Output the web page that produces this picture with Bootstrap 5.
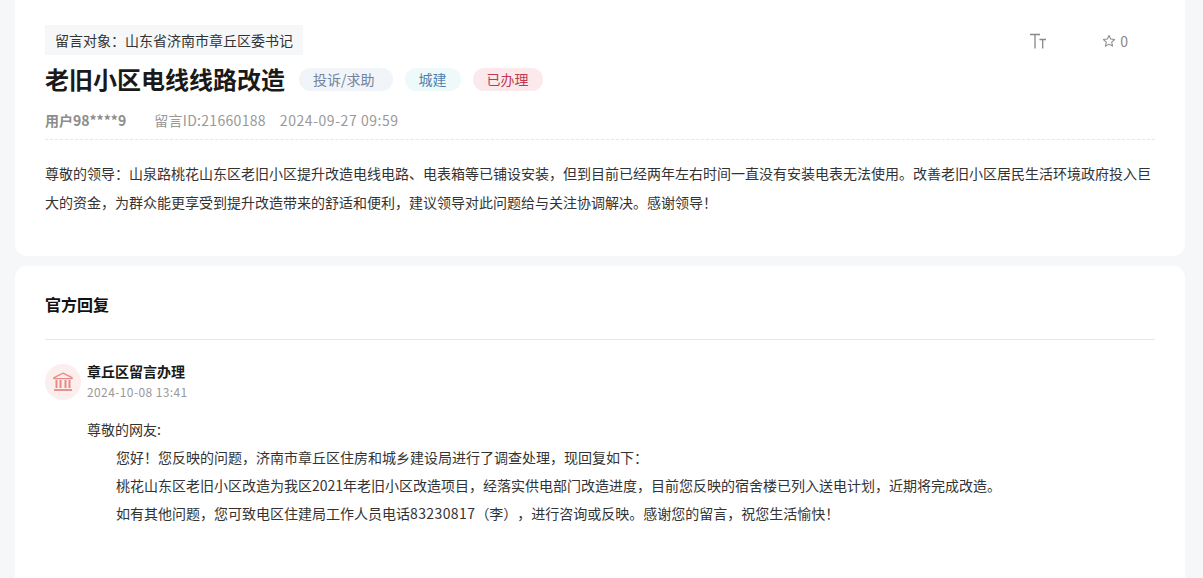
<!DOCTYPE html>
<html lang="zh-CN">
<head>
    <meta charset="UTF-8">
    <meta name="viewport" content="width=device-width, initial-scale=1.0">
    <title>留言详情</title>
    <link href="https://cdn.jsdelivr.net/npm/bootstrap@5.3.0/dist/css/bootstrap.min.css" rel="stylesheet">
    <style>
        html, body { height: 578px; overflow: hidden; }
        body { background: #f6f7f9; font-family: "Noto Sans CJK SC", "Liberation Sans", sans-serif; color: #222; font-size: 14px; text-spacing-trim: space-all; }
        .page-wrap { padding: 0 18px 0 15px; }
        .panel-box { background: #fff; border-radius: 12px; padding: 0 30px; }
        .panel-top { height: 256px; border-radius: 0 0 12px 12px; padding-top: 25px; margin-bottom: 10px; }
        .panel-reply { height: 330px; padding-top: 26px; }
        .target-tag { background: #f6f7f9; height: 30px; line-height: 30px; padding: 0 10px; color: #333; }
        .top-tools { width: 99px; margin-right: 27px; color: #888; height: 32px; }
        .main-title { font-size: 24px; font-weight: 700; color: #1a1a1a; line-height: 34px; margin: 0 2px 0 0; }
        .title-line { margin-top: 5px; gap: 12px; }
        .pill-tag { height: 23px; line-height: 23px; border-radius: 12px; padding: 0 14px; }
        .pill-type { background: #f1f4f9; color: #74839b; padding-right: 18px; }
        .pill-area { background: #eefaf9; color: #4f7fb0; }
        .pill-state { background: #fbe9ec; color: #c0394f; }
        .meta-line { margin-top: 14px; color: #999; line-height: 20px; padding-bottom: 9px; border-bottom: 1px dashed #e6e6e6; }
        .meta-user { font-weight: 700; color: #8c8c8c; margin-right: 28px; }
        .meta-id { margin-right: 14px; letter-spacing: .3px; }
        .meta-time { letter-spacing: .55px; }
        .body-text { margin: 19px 0 0; line-height: 29px; color: #333; }
        .reply-title { font-size: 16px; font-weight: 700; color: #111; line-height: 24px; padding-bottom: 23px; border-bottom: 1px solid #e8e8e8; }
        .reply-head { margin-top: 24px; }
        .org-icon { width: 36px; height: 36px; border-radius: 50%; background: #fdeeee; margin-right: 6px; }
        .org-text { margin-top: -2px; }
        .org-name { font-weight: 700; color: #1a1a1a; line-height: 18px; }
        .org-time { font-size: 12px; color: #999; line-height: 18px; margin-top: 3px; letter-spacing: .4px; }
        .reply-body { margin: 14px 0 0 42px; line-height: 28px; color: #333; }
        .reply-body p { margin: 0; }
        .reply-indent { padding-left: 29px; }
        .phone-no { letter-spacing: .4px; }
    </style>
</head>
<body>
    <div class="page-wrap">
        <!-- 留言内容 -->
        <div class="panel-box panel-top">
            <div class="d-flex justify-content-between">
                <div class="target-tag">留言对象：山东省济南市章丘区委书记</div>
                <div class="top-tools d-flex align-items-center justify-content-between">
                    <svg width="18" height="18" viewBox="0 0 18 18" fill="none" stroke="#888" stroke-width="1.3">
                        <path d="M1 2.5H11M6 2.5V16.5M10.5 7.5H17M13.7 7.5V16.5"/>
                    </svg>
                    <span class="d-flex align-items-center gap-1">
                        <svg width="14" height="14" viewBox="0 0 24 24" fill="none" stroke="#888" stroke-width="1.8" stroke-linejoin="round">
                            <path d="M12 2.5l2.9 6.2 6.7.8-5 4.6 1.4 6.7-6-3.4-6 3.4 1.4-6.7-5-4.6 6.7-.8z"/>
                        </svg>
                        0
                    </span>
                </div>
            </div>
            <div class="d-flex align-items-center title-line">
                <h1 class="main-title">老旧小区电线线路改造</h1>
                <span class="pill-tag pill-type">投诉/求助</span>
                <span class="pill-tag pill-area">城建</span>
                <span class="pill-tag pill-state">已办理</span>
            </div>
            <div class="meta-line">
                <span class="meta-user">用户98****9</span><span class="meta-id">留言ID:21660188</span><span class="meta-time">2024-09-27 09:59</span>
            </div>
            <p class="body-text">尊敬的领导：山泉路桃花山东区老旧小区提升改造电线电路、电表箱等已铺设安装，但到目前已经两年左右时间一直没有安装电表无法使用。改善老旧小区居民生活环境政府投入巨大的资金，为群众能更享受到提升改造带来的舒适和便利，建议领导对此问题给与关注协调解决。感谢领导！</p>
        </div>
        <!-- 官方回复 -->
        <div class="panel-box panel-reply">
            <div class="reply-title">官方回复</div>
            <div class="d-flex reply-head">
                <div class="org-icon d-flex align-items-center justify-content-center">
                    <svg width="22" height="20" viewBox="0 0 22 20" fill="none" stroke="#e58a84" stroke-width="1.4">
                        <path d="M11 1.2L20 5.6V6.6H2V5.6Z"/>
                        <path d="M4.5 8V16M8.5 8V16M13.5 8V16M17.5 8V16" stroke-width="2"/>
                        <path d="M2 18H20" stroke-width="1.8"/>
                    </svg>
                </div>
                <div class="org-text">
                    <div class="org-name">章丘区留言办理</div>
                    <div class="org-time">2024-10-08 13:41</div>
                </div>
            </div>
            <div class="reply-body">
                <p>尊敬的网友:</p>
                <p class="reply-indent">您好！您反映的问题，济南市章丘区住房和城乡建设局进行了调查处理，现回复如下：</p>
                <p class="reply-indent">桃花山东区老旧小区改造为我区2021年老旧小区改造项目，经落实供电部门改造进度，目前您反映的宿舍楼已列入送电计划，近期将完成改造。</p>
                <p class="reply-indent">如有其他问题，您可致电区住建局工作人员电话<span class="phone-no">83230817</span>（李），进行咨询或反映。感谢您的留言，祝您生活愉快！</p>
            </div>
        </div>
    </div>
    <script src="https://cdn.jsdelivr.net/npm/bootstrap@5.3.0/dist/js/bootstrap.bundle.min.js"></script>
</body>
</html>
